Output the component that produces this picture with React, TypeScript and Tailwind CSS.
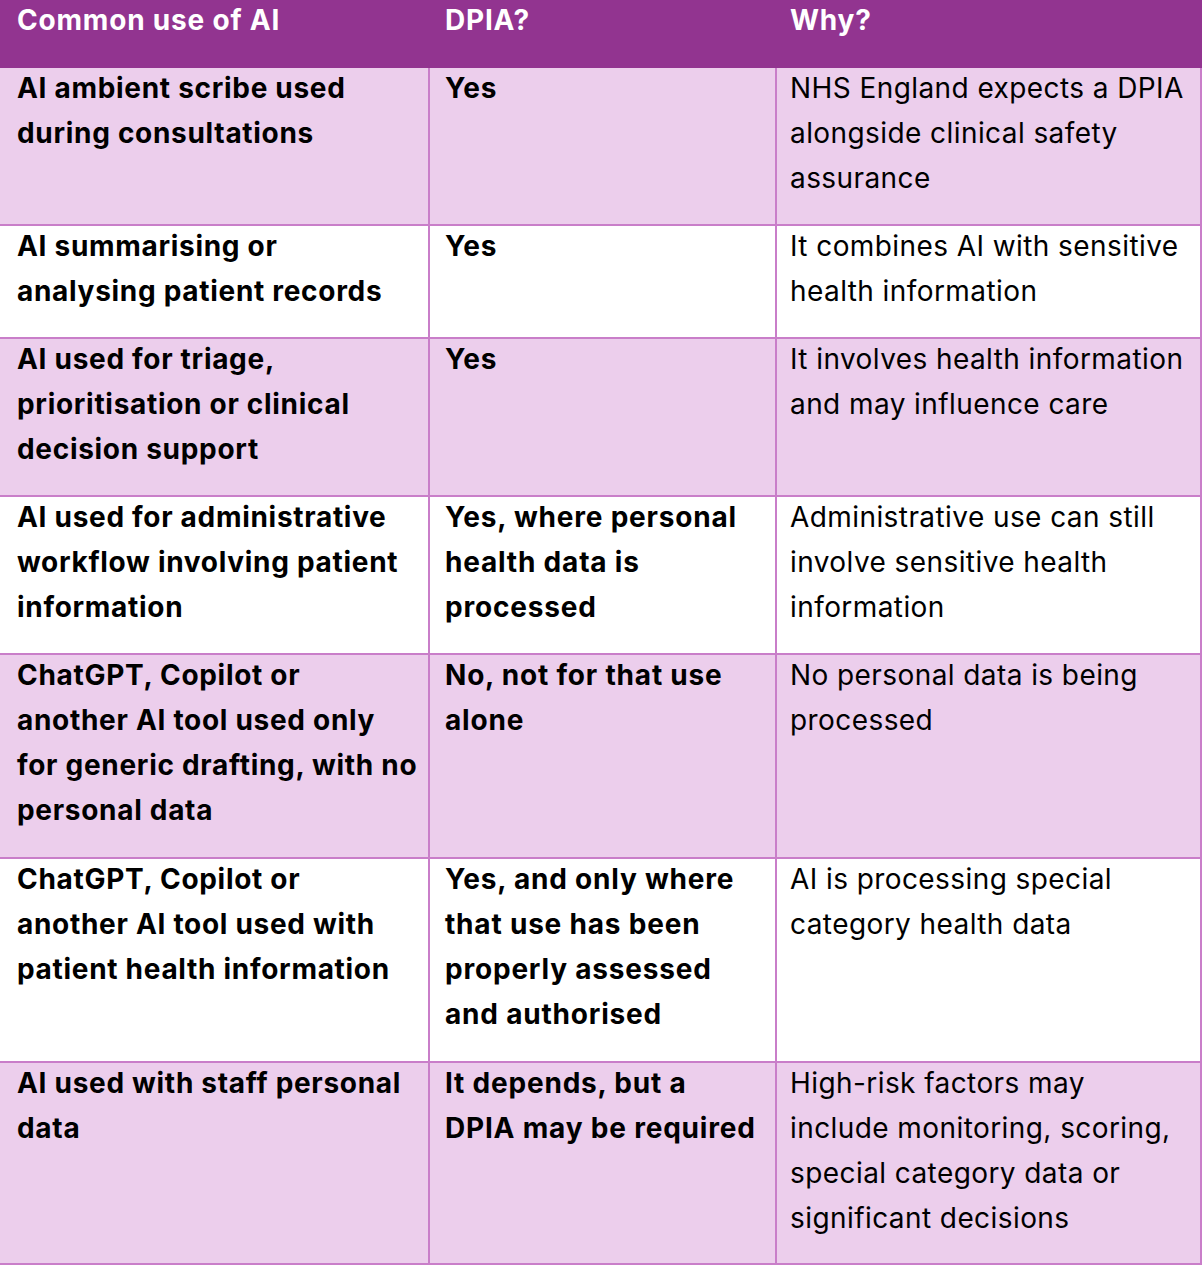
const rows: { use: string[]; dpia: string[]; why: string[] }[] = [
  {
    use: ['AI ambient scribe used', 'during consultations'],
    dpia: ['Yes'],
    why: ['NHS England expects a DPIA', 'alongside clinical safety', 'assurance'],
  },
  {
    use: ['AI summarising or', 'analysing patient records'],
    dpia: ['Yes'],
    why: ['It combines AI with sensitive', 'health information'],
  },
  {
    use: ['AI used for triage,', 'prioritisation or clinical', 'decision support'],
    dpia: ['Yes'],
    why: ['It involves health information', 'and may influence care'],
  },
  {
    use: ['AI used for administrative', 'workflow involving patient', 'information'],
    dpia: ['Yes, where personal', 'health data is', 'processed'],
    why: ['Administrative use can still', 'involve sensitive health', 'information'],
  },
  {
    use: ['ChatGPT, Copilot or', 'another AI tool used only', 'for generic drafting, with no', 'personal data'],
    dpia: ['No, not for that use', 'alone'],
    why: ['No personal data is being', 'processed'],
  },
  {
    use: ['ChatGPT, Copilot or', 'another AI tool used with', 'patient health information'],
    dpia: ['Yes, and only where', 'that use has been', 'properly assessed', 'and authorised'],
    why: ['AI is processing special', 'category health data'],
  },
  {
    use: ['AI used with staff personal', 'data'],
    dpia: ['It depends, but a', 'DPIA may be required'],
    why: ['High-risk factors may', 'include monitoring, scoring,', 'special category data or', 'significant decisions'],
  },
];

const Lines = ({ lines }: { lines: string[] }) => (
  <div className="-mt-[2px]">
    {lines.map((l, i) => (
      <div key={i} className="whitespace-nowrap">
        {l}
      </div>
    ))}
  </div>
);

export default function App() {
  return (
    <div className="w-[1202px] bg-white text-black font-['Inter',sans-serif] text-[28px]">
      <div className="grid grid-cols-[430px_347px_425px] h-[68px] bg-[#923490] text-white font-bold leading-[40px] tracking-[0.8px]">
        <div className="pl-[17px]">Common use of AI</div>
        <div className="pl-[15px]">DPIA?</div>
        <div className="pl-[13px]">Why?</div>
      </div>
      {rows.map((r, i) => {
        const tall = Math.max(r.use.length, r.dpia.length, r.why.length) > 3;
        const last = i === rows.length - 1;
        const pad = tall ? (last ? 'pb-[22px]' : 'pb-[24px]') : 'pb-[23px]';
        return (
          <div
            key={i}
            className={`grid grid-cols-[430px_347px_425px] border-b-2 border-[#c97ec9] leading-[45px] ${
              i % 2 === 0 ? 'bg-[#ecceec]' : 'bg-white'
            }`}
          >
            <div className={`border-r-2 border-[#c97ec9] pl-[17px] ${pad} font-bold tracking-[0.7px]`}>
              <Lines lines={r.use} />
            </div>
            <div className={`border-r-2 border-[#c97ec9] pl-[15px] ${pad} font-bold tracking-[0.8px]`}>
              <Lines lines={r.dpia} />
            </div>
            <div className={`border-r-2 border-[#c97ec9] pl-[13px] ${pad} tracking-[0.42px]`}>
              <Lines lines={r.why} />
            </div>
          </div>
        );
      })}
    </div>
  );
}
